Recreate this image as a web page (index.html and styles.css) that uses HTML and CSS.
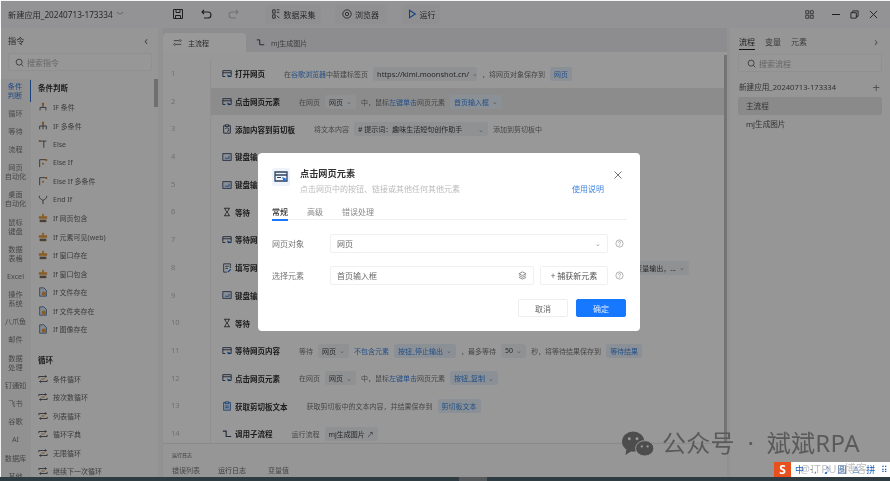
FILE: index.html
```html
<!DOCTYPE html>
<html lang="zh-CN">
<head>
<meta charset="utf-8">
<title>新建应用</title>
<link rel="stylesheet" href="styles.css">
</head>
<body>
<svg class="defs" width="0" height="0">
  <symbol id="web" viewBox="0 0 12 12"><path d="M1 2h10v7H7M1 2v7h3M1 4.500h10" fill="none" stroke="#31425f" stroke-width="1.100"/><path d="M6 6.500l4 1.600-1.700.7-.7 1.700z" fill="#1f6fd6"/></symbol>
  <symbol id="key" viewBox="0 0 12 12"><rect x="1" y="2" width="10" height="8" fill="#e4ecf7" stroke="#31425f"/><path d="M3.500 7.500h5M8.500 4.500v3" stroke="#1f6fd6" fill="none"/></symbol>
  <symbol id="wait" viewBox="0 0 12 12"><path d="M2.500 1.500h7M2.500 10.500h7M3.500 1.500c0 3.500 5 5.500 5 9M8.500 1.500c0 3.500-5 5.500-5 9" fill="none" stroke="#333" stroke-width="1"/></symbol>
  <symbol id="form" viewBox="0 0 12 12"><path d="M2 1h8v5M2 1v10h4M4 4h4M4 6.500h3" fill="none" stroke="#31425f"/><path d="M6.500 10.500l3.500-3.500 1 1-3.500 3.500z" fill="#1f6fd6"/></symbol>
  <symbol id="clip" viewBox="0 0 12 12"><path d="M3.500 2h-1.500v9h8v-9h-1.500" fill="none" stroke="#31425f" stroke-width="1.100"/><rect x="4" y="1" width="4" height="2" fill="none" stroke="#31425f"/><path d="M6 9a2.200 2.200 0 1 0-2-3" fill="none" stroke="#31425f"/></symbol>
  <symbol id="paste" viewBox="0 0 12 12"><rect x="2" y="2" width="8" height="9" fill="#d7e6fa" stroke="#2a6fc4"/><rect x="4" y="1" width="4" height="2" fill="#fff" stroke="#2a6fc4"/><path d="M4 6h4M4 8h4" stroke="#2a6fc4"/></symbol>
  <symbol id="sub" viewBox="0 0 12 12"><path d="M1 2.500h4v6.500h6" fill="none" stroke="#31425f" stroke-width="1.300"/></symbol>
  <symbol id="iftree" viewBox="0 0 12 12"><path d="M6 1v3M2.500 10V6.500h7V10M6 4v2.500" fill="none" stroke="#444"/><circle cx="6" cy="2.500" r="1.500" fill="#d98a3d"/></symbol>
  <symbol id="ifmulti" viewBox="0 0 12 12"><path d="M6 1v4M2 10V6h8v4M6 5v5" fill="none" stroke="#444"/><circle cx="6" cy="2.500" r="1.500" fill="#d98a3d"/></symbol>
  <symbol id="else" viewBox="0 0 12 12"><path d="M1 2.500h9M7 2.500v8" fill="none" stroke="#444"/><circle cx="2" cy="2.500" r="1.200" fill="#d98a3d"/></symbol>
  <symbol id="elseif" viewBox="0 0 12 12"><path d="M2 11V2h8" fill="none" stroke="#444"/><circle cx="10" cy="2.500" r="1.300" fill="#d98a3d"/><circle cx="6" cy="7" r="1.200" fill="#d98a3d"/></symbol>
  <symbol id="endif" viewBox="0 0 12 12"><path d="M1.500 1c0 5 4.500 4 4.500 6v4M10.500 1c0 5-4.500 4-4.500 6" fill="none" stroke="#444"/></symbol>
  <symbol id="ifweb" viewBox="0 0 12 12"><path d="M5 1h2v3h4v3H1V4h4z" fill="#e39a3d"/><path d="M2 8h8v3H2z" fill="#7a6a55"/></symbol>
  <symbol id="iffile" viewBox="0 0 12 12"><path d="M2 1h5l3 3v7H2z" fill="#dbe6f4" stroke="#476a96"/><circle cx="7" cy="8" r="2.500" fill="#e39a3d"/></symbol>
  <symbol id="loop" viewBox="0 0 12 12"><path d="M1 5V3h9M11 7v2H2M8.500 1.500l1.500 1.500-1.500 1.500M3.500 7.500l-1.500 1.500 1.500 1.500" fill="none" stroke="#444"/><path d="M4 6h4" stroke="#e39a3d" stroke-width="1.400"/></symbol>
  <symbol id="search" viewBox="0 0 12 12"><circle cx="5.500" cy="5.500" r="4" fill="none" stroke="#555" stroke-width="1.100"/><path d="M8.500 8.500l2.500 2.500" stroke="#555" stroke-width="1.100"/></symbol>
  <symbol id="help" viewBox="0 0 12 12"><circle cx="6" cy="6" r="4.800" fill="none" stroke="#999"/><path d="M4.500 4.800a1.500 1.500 0 1 1 2.200 1.300c-.5.300-.7.500-.7 1.100M6 8.200v1" fill="none" stroke="#999"/></symbol>
</svg>

<div class="app">
  <header class="topbar">
    <div class="app-name">新建应用_20240713-173334<span class="caret">﹀</span></div>
    <div class="tools">
      <svg class="tool-ico" viewBox="0 0 12 12"><path d="M1.500 1.500h9v9h-9zM4 1.500v3h4v-3M3.500 10.500v-3h5v3" fill="none" stroke="#333"/></svg>
      <svg class="tool-ico" viewBox="0 0 12 12"><path d="M2 4h6a2.700 2.700 0 0 1 0 6H4M4 2L2 4l2 2" fill="none" stroke="#333" stroke-width="1.100"/></svg>
      <svg class="tool-ico faint" viewBox="0 0 12 12"><path d="M10 4H4a2.700 2.700 0 0 0 0 6h4M8 2l2 2-2 2" fill="none" stroke="#aaa" stroke-width="1.100"/></svg>
    </div>
    <div class="tbtn tbtn-a"><svg class="tbtn-ico" viewBox="0 0 12 12"><path d="M2 1h3v4H2zM2 7h3v4H2zM7 1h3M7 4h3M7 8l3 3" fill="none" stroke="#333"/></svg>数据采集</div>
    <div class="tbtn tbtn-b"><svg class="tbtn-ico" viewBox="0 0 12 12"><circle cx="6" cy="6" r="5" fill="none" stroke="#333"/><circle cx="6" cy="6" r="2" fill="none" stroke="#333"/></svg>浏览器</div>
    <div class="tbtn tbtn-c"><svg class="tbtn-ico" viewBox="0 0 12 12"><path d="M3 1.500l7 4.500-7 4.500z" fill="none" stroke="#1f6fd6" stroke-width="1.300"/></svg>运行</div>
    <div class="win">
      <svg class="win-qr" viewBox="0 0 12 12"><path d="M1 1h4v4H1zM7 1h4v4H7zM1 7h4v4H1zM7 7h4v4H7z" fill="none" stroke="#333"/></svg>
      <span class="win-min"></span>
      <svg class="win-ico" viewBox="0 0 10 10"><path d="M1 3h6v6H1zM3 3V1h6v6H7" fill="none" stroke="#333"/></svg>
      <svg class="win-ico" viewBox="0 0 10 10"><path d="M1 1l8 8M9 1L1 9" stroke="#333" fill="none"/></svg>
    </div>
  </header>

  <div class="main">
    <aside class="left">
      <div class="left-head"><span>指令</span><span class="chev">‹</span></div>
      <div class="search left-search"><svg class="s-ico"><use href="#search"/></svg>搜索指令</div>
      <div class="left-body">
        <nav class="cats">
          <div class="cat cat-on">条件<br>判断</div>
          <div class="cat">循环</div>
          <div class="cat">等待</div>
          <div class="cat">流程</div>
          <div class="cat">网页<br>自动化</div>
          <div class="cat">桌面<br>自动化</div>
          <div class="cat">鼠标<br>键盘</div>
          <div class="cat">数据<br>表格</div>
          <div class="cat">Excel</div>
          <div class="cat">操作<br>系统</div>
          <div class="cat">八爪鱼</div>
          <div class="cat">邮件</div>
          <div class="cat">数据<br>处理</div>
          <div class="cat">钉通知</div>
          <div class="cat">飞书</div>
          <div class="cat">谷歌</div>
          <div class="cat">AI</div>
          <div class="cat">数据库</div>
          <div class="cat">其他</div>
        </nav>
        <div class="cmds">
          <h3 class="cmd-h">条件判断</h3>
          <div class="cmd"><svg><use href="#iftree"/></svg>IF 条件</div>
          <div class="cmd"><svg><use href="#ifmulti"/></svg>IF 多条件</div>
          <div class="cmd"><svg><use href="#else"/></svg>Else</div>
          <div class="cmd"><svg><use href="#elseif"/></svg>Else If</div>
          <div class="cmd"><svg><use href="#elseif"/></svg>Else If 多条件</div>
          <div class="cmd"><svg><use href="#endif"/></svg>End If</div>
          <div class="cmd"><svg><use href="#ifweb"/></svg>If 网页包含</div>
          <div class="cmd"><svg><use href="#ifweb"/></svg>If 元素可见(web)</div>
          <div class="cmd"><svg><use href="#ifweb"/></svg>If 窗口存在</div>
          <div class="cmd"><svg><use href="#ifweb"/></svg>If 窗口包含</div>
          <div class="cmd"><svg><use href="#iffile"/></svg>If 文件存在</div>
          <div class="cmd"><svg><use href="#iffile"/></svg>If 文件夹存在</div>
          <div class="cmd"><svg><use href="#iffile"/></svg>If 图像存在</div>
          <h3 class="cmd-h cmd-h2">循环</h3>
          <div class="cmd"><svg><use href="#loop"/></svg>条件循环</div>
          <div class="cmd"><svg><use href="#loop"/></svg>按次数循环</div>
          <div class="cmd"><svg><use href="#loop"/></svg>列表循环</div>
          <div class="cmd"><svg><use href="#loop"/></svg>循环字典</div>
          <div class="cmd"><svg><use href="#loop"/></svg>无限循环</div>
          <div class="cmd"><svg><use href="#loop"/></svg>继续下一次循环</div>
        </div>
        <div class="left-thumb"></div>
      </div>
    </aside>

    <section class="center">
      <div class="tabs">
        <div class="tab tab-on"><svg class="tab-ico" viewBox="0 0 12 12"><path d="M1 3.500h8M3 8.500h8M9 1.500l2 2-2 2M3 6.500l-2 2 2 2" fill="none" stroke="#444"/></svg>主流程</div>
        <div class="tab"><svg class="tab-ico"><use href="#sub"/></svg>mj生成图片</div>
      </div>
      <div class="flow">
        <div class="nums">
          <div>1</div><div>2</div><div>3</div><div>4</div><div>5</div><div>6</div><div>7</div><div>8</div><div>9</div><div>10</div><div>11</div><div>12</div><div>13</div><div>14</div>
        </div>
        <div class="rows">
          <div class="row"><svg class="r-ico"><use href="#web"/></svg><b class="r-t">打开网页</b><span class="r-d r-d1">在<i>谷歌浏览器</i>中新建标签页</span><span class="tag tag-g tag-url">https://kimi.moonshot.cn/<em>⌄</em></span><span class="r-d">，将网页对象保存到</span><span class="tag tag-b">网页</span></div>
          <div class="row row-on"><svg class="r-ico"><use href="#web"/></svg><b class="r-t">点击网页元素</b><span class="r-d r-d1">在网页</span><span class="tag tag-g">网页<em>⌄</em></span><span class="r-d">中，鼠标<i>左键单击</i>网页元素</span><span class="tag tag-b">首页输入框<em>⌄</em></span></div>
          <div class="row"><svg class="r-ico"><use href="#clip"/></svg><b class="r-t">添加内容到剪切板</b><span class="r-d r-d1">将文本内容</span><span class="tag tag-g tag-wide"># 提示词：趣味生活短句创作助手<em>⌄</em></span><span class="r-d">添加到剪切板中</span></div>
          <div class="row"><svg class="r-ico"><use href="#key"/></svg><b class="r-t">键盘输入</b></div>
          <div class="row"><svg class="r-ico"><use href="#key"/></svg><b class="r-t">键盘输入</b></div>
          <div class="row"><svg class="r-ico"><use href="#wait"/></svg><b class="r-t">等待</b></div>
          <div class="row"><svg class="r-ico"><use href="#web"/></svg><b class="r-t">等待网页内容</b></div>
          <div class="row row-8"><svg class="r-ico"><use href="#form"/></svg><b class="r-t">填写网页输入框</b><span class="tag tag-g tag-end">变量输出，...<em>⌄</em></span></div>
          <div class="row"><svg class="r-ico"><use href="#key"/></svg><b class="r-t">键盘输入</b></div>
          <div class="row"><svg class="r-ico"><use href="#wait"/></svg><b class="r-t">等待</b></div>
          <div class="row"><svg class="r-ico"><use href="#web"/></svg><b class="r-t">等待网页内容</b><span class="r-d r-d1">等待</span><span class="tag tag-g">网页<em>⌄</em></span><span class="r-d"><i>不包含元素</i></span><span class="tag tag-b">按钮_停止输出<em>⌄</em></span><span class="r-d">，最多等待</span><span class="tag tag-g">50<em>⌄</em></span><span class="r-d">秒，将等待结果保存到</span><span class="tag tag-b">等待结果</span></div>
          <div class="row"><svg class="r-ico"><use href="#web"/></svg><b class="r-t">点击网页元素</b><span class="r-d r-d1">在网页</span><span class="tag tag-g">网页<em>⌄</em></span><span class="r-d">中，鼠标<i>左键单击</i>网页元素</span><span class="tag tag-b">按钮_复制<em>⌄</em></span></div>
          <div class="row"><svg class="r-ico"><use href="#paste"/></svg><b class="r-t">获取剪切板文本</b><span class="r-d r-d1">获取剪切板中的文本内容，并结果保存到</span><span class="tag tag-b">剪切板文本</span></div>
          <div class="row"><svg class="r-ico"><use href="#sub"/></svg><b class="r-t">调用子流程</b><span class="r-d r-d1">运行流程</span><span class="tag tag-g">mj生成图片 ↗</span></div>
        </div>
        <div class="flow-thumb"></div>
      </div>
      <div class="logs">
        <div class="log-head">运行日志</div>
        <div class="log-tabs">
          <span>错误列表</span><span class="log-on">运行日志</span><span class="log-var">变量值</span>
        </div>
      </div>
    </section>

    <aside class="right">
      <div class="r-tabs"><span class="r-on">流程</span><span>变量</span><span>元素</span><span class="r-chev">›</span></div>
      <div class="search right-search"><svg class="s-ico"><use href="#search"/></svg>搜索流程</div>
      <div class="r-app"><span>新建应用_20240713-173334</span><span class="plus">+</span></div>
      <div class="r-item r-item-on">主流程</div>
      <div class="r-item">mj生成图片</div>
    </aside>
  </div>

  <div class="overlay"></div>

  <div class="dialog">
    <div class="d-head">
      <div class="d-logo"><svg viewBox="0 0 18 18"><path d="M3 4h12v9H3zM3 7h12" fill="none" stroke="#31425f" stroke-width="1.300"/><path d="M5 9.500h4" stroke="#31425f"/><path d="M10 9l5 2-2 1-1 2z" fill="#1f6fd6"/></svg></div>
      <div class="d-titles">
        <div class="d-title">点击网页元素</div>
        <div class="d-sub">点击网页中的按钮、链接或其他任何其他元素</div>
      </div>
      <a class="d-link">使用说明</a>
      <svg class="d-close" viewBox="0 0 10 10"><path d="M1.500 1.500l7 7M8.500 1.500l-7 7" stroke="#777" fill="none"/></svg>
    </div>
    <div class="d-tabs"><span class="d-on">常规</span><span>高级</span><span>错误处理</span></div>
    <div class="d-field">
      <label class="d-label">网页对象</label>
      <div class="d-input d-grow"><span>网页</span><span class="d-arrow">⌄</span></div>
      <svg class="d-help"><use href="#help"/></svg>
    </div>
    <div class="d-field d-field2">
      <label class="d-label">选择元素</label>
      <div class="d-input d-grow"><span>首页输入框</span><svg class="d-stack" viewBox="0 0 10 10"><path d="M5 1l4 2-4 2-4-2zM1 5l4 2 4-2M1 7l4 2 4-2" fill="none" stroke="#777" stroke-width=".9"/></svg></div>
      <div class="d-input d-capture">+ 捕获新元素</div>
      <svg class="d-help"><use href="#help"/></svg>
    </div>
    <div class="d-foot">
      <button class="btn">取消</button>
      <button class="btn btn-primary">确定</button>
    </div>
  </div>

  <div class="mark">
    <svg class="mark-ico" viewBox="0 0 36 28"><ellipse cx="14" cy="12" rx="11.500" ry="10.500" fill="#4d4d4d"/><path d="M7 20l-1 6 6-4z" fill="#4d4d4d"/><ellipse cx="26" cy="19" rx="9.500" ry="8" fill="#4d4d4d" stroke="#999"/><circle cx="10" cy="9" r="1.500" fill="#999"/><circle cx="18" cy="9" r="1.500" fill="#999"/><circle cx="23" cy="17" r="1.200" fill="#999"/><circle cx="29" cy="17" r="1.200" fill="#999"/></svg>
    <span>公众号 · 斌斌RPA</span>
  </div>

  <div class="ime">
    <span class="ime-s">S</span><span class="ime-t">中 ·, ♪ 圆 ♙ 拼 ⠿</span><span class="ime-w">@ITPUB博客</span>
  </div>
  <div class="taskbar"><span class="task-item"></span></div>
</div>
</body>
</html>
```
FILE: styles.css
```css
* { box-sizing: border-box; }
html, body { margin: 0; padding: 0; }
body {
  width: 890px; height: 481px; overflow: hidden; background: #fff;
  font-family: "Noto Sans", "Noto Sans CJK SC", sans-serif; color: #333;
}
.defs { position: absolute; }
svg { display: block; }

.app { position: relative; width: 890px; height: 481px; overflow: hidden; filter: blur(.6px); background: #f3f3f5; }

/* top bar */
.topbar { height: 28px; display: flex; align-items: center; background: #f6f6f8; font-size: 8.200px; color: #444; position: relative; }
.app-name { width: 172px; padding-left: 8px; white-space: nowrap; }
.caret { font-size: 7px; margin-left: 4px; color: #777; }
.tools { display: flex; gap: 16px; width: 93px; }
.tool-ico { width: 12px; height: 12px; }
.faint { opacity: .7; }
.tbtn { height: 19px; display: flex; align-items: center; gap: 3px; font-size: 8px; background: #f0f0f3; border-radius: 3px; justify-content: center; }
.tbtn-ico { width: 10px; height: 10px; }
.tbtn-a { width: 56px; margin-right: 14px; }
.tbtn-b { width: 51px; margin-right: 16px; }
.tbtn-c { width: 38px; }
.win { margin-left: auto; display: flex; align-items: center; padding-right: 12px; gap: 10px; }
.win-qr { width: 9px; height: 9px; margin-right: 8px; }
.win-min { width: 8px; height: 1px; background: #333; }
.win-ico { width: 9px; height: 9px; }

.main { display: flex; height: 453px; }

/* left panel */
.left { width: 158px; background: #fafafa; display: flex; flex-direction: column; flex: none; }
.left-head { height: 24px; padding: 0 10px 0 8px; display: flex; justify-content: space-between; align-items: center; font-size: 8.200px; color: #444; }
.chev { font-size: 12px; color: #777; }
.search { height: 18px; display: flex; align-items: center; gap: 3px; font-size: 8px; color: #aaa; border: 1px solid #f0f0f2; background: #fcfcfd; border-radius: 2px; }
.s-ico { width: 9px; height: 9px; flex: none; }
.left-search { margin: 1px 6px 0 8px; padding-left: 6px; }
.left-body { flex: 1; display: flex; min-height: 0; overflow: hidden; position: relative; margin-top: 8px; }
.cats { width: 31px; flex: none; background: #f2f2f4; padding-top: 1px; text-align: center; font-size: 7.200px; line-height: 9px; color: #777; display: flex; flex-direction: column; }
.cat { padding: 4.600px 0; }
.cat-on { color: #3b78d8; border-right: 1.500px solid #2f6fd0; padding: 2px 0; margin-bottom: 2px; }
.cmds { flex: 1; padding-left: 7px; font-size: 7px; color: #666; }
.cmd-h { margin: 0; height: 19px; line-height: 19px; font-size: 7.500px; font-weight: 700; color: #333; }
.cmd-h2 { margin-top: 12px; }
.cmd { height: 18.500px; display: flex; align-items: center; gap: 5px; white-space: nowrap; }
.cmd svg { width: 10px; height: 10px; flex: none; }
.left-thumb { position: absolute; right: 0; top: 0; width: 4px; height: 28px; background: #b9b9bb; }

/* center */
.center { flex: 1; min-width: 0; display: flex; flex-direction: column; background: #fff; border-left: 5px solid #f3f3f5; border-right: 3px solid #f3f3f5; }
.tabs { height: 24px; display: flex; align-items: flex-end; background: #ececef; font-size: 7px; color: #666; }
.tab { height: 19px; display: flex; align-items: center; gap: 6px; padding: 0 10px; }
.tab-on { width: 83px; background: #fff; border-radius: 4px 4px 0 0; color: #444; }
.tab-ico { width: 9px; height: 9px; flex: none; }
.flow { flex: 1; min-height: 0; display: flex; overflow: hidden; padding-top: 8px; position: relative; background: #fdfdfd; }
.nums { width: 48px; flex: none; padding-left: 8px; font-size: 7.500px; color: #bbb; border-right: 1px solid #f0f0f0; }
.nums div { height: 27.700px; line-height: 27.700px; }
.rows { flex: 1; min-width: 0; padding-right: 3px; }
.row { height: 27.700px; display: flex; align-items: center; padding-left: 11px; font-size: 7px; color: #777; white-space: nowrap; overflow: hidden; gap: 5px; }
.row-on { background: #e9e9ec; }
.r-ico { width: 10px; height: 10px; flex: none; margin-right: -2px; }
.r-t { font-size: 7.500px; color: #303030; font-weight: 700; }
.r-d1 { margin-left: 14px; }
.r-d i { font-style: normal; color: #3f86e0; }
.tag { height: 14px; padding: 0 4px; display: inline-flex; align-items: center; gap: 3px; border-radius: 2px; font-size: 7px; }
.tag em { font-style: normal; color: #999; font-size: 7px; }
.tag-g { background: #f0f2f5; color: #444; }
.tag-b { background: #e6f1fb; color: #3f86e0; }
.tag-url { width: 104px; justify-content: space-between; font-size: 7.500px; }
.tag-wide { width: 134px; justify-content: space-between; }
.tag-end { margin-left: auto; margin-right: 35px; }
.flow-thumb { position: absolute; right: 0; top: 3px; bottom: 0; width: 3px; background: #c2c2c4; }
.logs { height: 37px; flex: none; background: #fafafa; box-shadow: 0 -1px 1px #e8e8e8; padding-left: 9px; position: relative; }
.log-head { font-size: 5px; line-height: 6px; padding-top: 8px; color: #555; }
.log-tabs { display: flex; font-size: 7px; color: #777; height: 23px; gap: 18px; align-items: center; padding-top: 1px; }
.log-on { position: relative; color: #666; }
.log-on::after { content: ""; position: absolute; left: -2px; right: -2px; bottom: -6px; height: 2px; background: #4b7fd8; }
.log-var { margin-left: 4px; }

/* right */
.right { width: 160px; flex: none; background: #fafafa; padding: 0 8px; font-size: 7.600px; color: #555; }
.r-tabs { height: 26px; display: flex; align-items: center; gap: 10px; font-size: 8px; color: #666; padding: 1px 0 0 1px; }
.r-on { color: #333; position: relative; }
.r-on::after { content: ""; position: absolute; left: 0; right: 0; bottom: -3px; height: 1px; background: #222; }
.r-chev { margin-left: auto; margin-right: 4px; font-size: 12px; color: #888; }
.right-search { margin-top: 0; padding-left: 8px; }
.r-app { height: 24px; margin-top: 1px; display: flex; justify-content: space-between; align-items: center; padding: 3px 2px 0 1px; }
.plus { font-size: 13px; color: #888; }
.r-item { height: 18px; line-height: 18px; padding-left: 8px; border-radius: 2px; }
.r-item-on { background: #e6e6e8; }

/* modal layers */
.overlay { position: absolute; inset: 1px 0 0 1px; background: rgba(0, 0, 0, .4); }
.dialog { position: absolute; left: 258px; top: 153px; width: 382px; height: 178px; background: #fff; border-radius: 4px; padding: 14px 14px 0; }
.d-head { display: flex; height: 21px; align-items: flex-start; position: relative; }
.d-logo { width: 18px; height: 18px; background: #eff4fb; border-radius: 2px; margin-top: 1px; }
.d-logo svg { width: 18px; height: 18px; }
.d-titles { margin-left: 10px; flex: 1; }
.d-title { font-size: 9.200px; line-height: 13px; font-weight: 700; color: #333; }
.d-sub { font-size: 8px; line-height: 12px; margin-top: 3px; color: #bbb; }
.d-link { font-size: 8px; color: #3f86e0; margin-top: 16px; margin-right: 22px; }
.d-close { position: absolute; right: 3px; top: 3px; width: 10px; height: 10px; }
.d-tabs { margin-top: 15px; height: 17px; display: flex; gap: 19px; font-size: 8px; color: #888; border-bottom: 1px solid #f0f0f0; width: 355px; align-items: center; padding-top: 1px; }
.d-on { color: #333; font-weight: 500; position: relative; height: 16px; line-height: 15px; }
.d-on::after { content: ""; position: absolute; left: 0; right: 0; bottom: -1px; height: 2px; background: #1677ff; }
.d-field { display: flex; align-items: center; margin-top: 14px; height: 19px; }
.d-field2 { margin-top: 13px; }
.d-label { width: 58px; font-size: 8px; color: #777; flex: none; }
.d-input { height: 19px; border: 1px solid #f0f0f0; border-radius: 2px; display: flex; align-items: center; font-size: 8px; color: #666; padding: 0 6px; justify-content: space-between; }
.d-grow { flex: 1; }
.d-arrow { color: #999; font-size: 7px; }
.d-stack { width: 9px; height: 9px; }
.d-capture { width: 68px; margin-left: 6px; justify-content: center; color: #555; flex: none; }
.d-help { width: 9px; height: 9px; margin: 0 2px 0 7px; flex: none; }
.d-foot { display: flex; justify-content: flex-end; gap: 8px; margin-top: 14px; width: 354px; }
.btn { width: 50px; height: 18px; padding: 0; font: inherit; font-size: 8px; border: 1px solid #eee; border-radius: 2px; background: #fff; color: #666; }
.btn-primary { background: #1677ff; border-color: #1677ff; color: #dfeaff; }

.mark { position: absolute; left: 619px; top: 429px; display: flex; align-items: center; gap: 7px; font-size: 24px; line-height: 28px; color: #5a5a5a; white-space: nowrap; word-spacing: 6px; letter-spacing: .3px; }
.mark-ico { width: 36px; height: 27px; }

.ime { position: absolute; left: 774px; top: 462px; width: 116px; height: 15px; background: #fff; display: flex; align-items: center; overflow: hidden; }
.ime-s { width: 17px; height: 15px; flex: none; background: #e8501e; color: #fff; font-size: 12px; font-weight: 700; line-height: 15px; text-align: center; }
.ime-t { font-size: 9px; margin-left: 4px; color: #1d5fb5; white-space: nowrap; letter-spacing: 1.800px; }
.ime-w { position: absolute; left: 26px; top: -2px; font-size: 11px; letter-spacing: .5px; color: rgba(150, 150, 150, .6); white-space: nowrap; }
.taskbar { position: absolute; left: 0; right: 0; bottom: 0; height: 4px; background: #2e3b41; }
.task-item { display: block; width: 28px; height: 4px; margin-left: 459px; background: #56595b; }
```
